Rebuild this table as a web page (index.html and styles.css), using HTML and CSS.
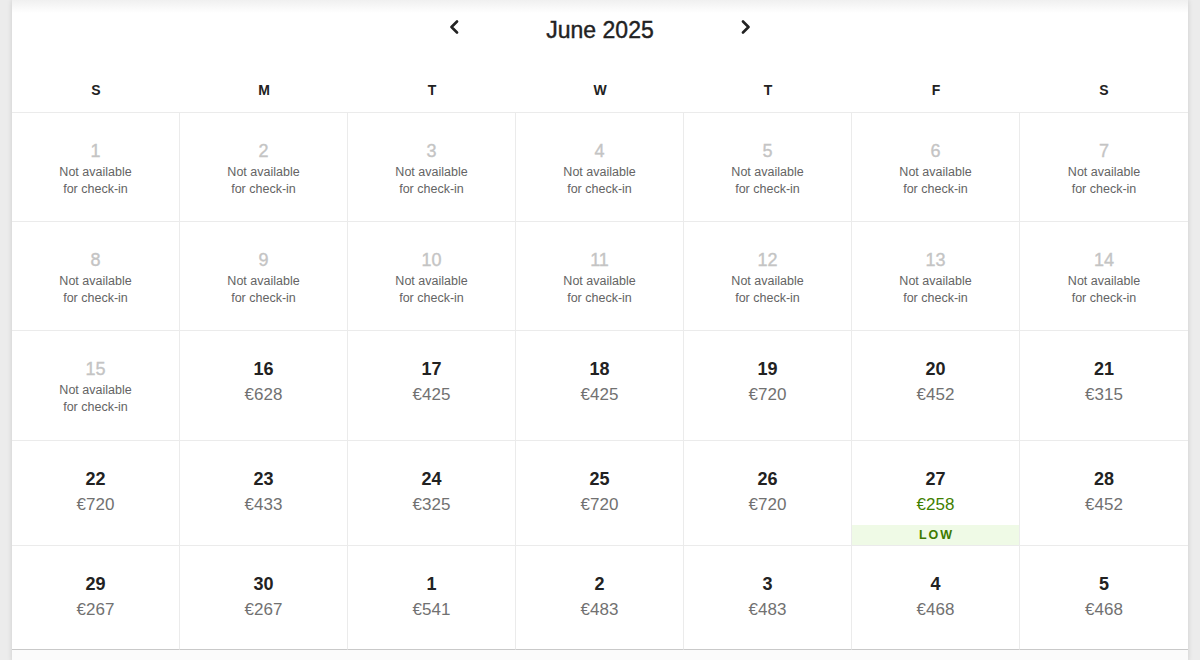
FILE: index.html
```html
<!DOCTYPE html>
<html lang="en">
<head>
<meta charset="utf-8">
<title>June 2025</title>
<link rel="stylesheet" href="styles.css">
</head>
<body>
<div class="panel">
  <div class="head">
    <button class="nav" aria-label="Previous month"><svg width="10" height="14" viewBox="0 0 10 14"><path d="M8 1.5 L2.5 7 L8 12.5" fill="none" stroke="#222" stroke-width="2.6" stroke-linecap="round" stroke-linejoin="round"/></svg></button>
    <div class="title">June 2025</div>
    <button class="nav" aria-label="Next month"><svg width="10" height="14" viewBox="0 0 10 14"><path d="M2 1.5 L7.5 7 L2 12.5" fill="none" stroke="#222" stroke-width="2.6" stroke-linecap="round" stroke-linejoin="round"/></svg></button>
  </div>
  <div class="weekdays">
    <div>S</div><div>M</div><div>T</div><div>W</div><div>T</div><div>F</div><div>S</div>
  </div>
  <div class="grid">
    <div class="cell na"><div class="d">1</div><div class="t">Not available<br>for check-in</div></div>
    <div class="cell na"><div class="d">2</div><div class="t">Not available<br>for check-in</div></div>
    <div class="cell na"><div class="d">3</div><div class="t">Not available<br>for check-in</div></div>
    <div class="cell na"><div class="d">4</div><div class="t">Not available<br>for check-in</div></div>
    <div class="cell na"><div class="d">5</div><div class="t">Not available<br>for check-in</div></div>
    <div class="cell na"><div class="d">6</div><div class="t">Not available<br>for check-in</div></div>
    <div class="cell na"><div class="d">7</div><div class="t">Not available<br>for check-in</div></div>

    <div class="cell na"><div class="d">8</div><div class="t">Not available<br>for check-in</div></div>
    <div class="cell na"><div class="d">9</div><div class="t">Not available<br>for check-in</div></div>
    <div class="cell na"><div class="d">10</div><div class="t">Not available<br>for check-in</div></div>
    <div class="cell na"><div class="d">11</div><div class="t">Not available<br>for check-in</div></div>
    <div class="cell na"><div class="d">12</div><div class="t">Not available<br>for check-in</div></div>
    <div class="cell na"><div class="d">13</div><div class="t">Not available<br>for check-in</div></div>
    <div class="cell na"><div class="d">14</div><div class="t">Not available<br>for check-in</div></div>

    <div class="cell na tall"><div class="d">15</div><div class="t">Not available<br>for check-in</div></div>
    <div class="cell"><div class="d">16</div><div class="p">€628</div></div>
    <div class="cell"><div class="d">17</div><div class="p">€425</div></div>
    <div class="cell"><div class="d">18</div><div class="p">€425</div></div>
    <div class="cell"><div class="d">19</div><div class="p">€720</div></div>
    <div class="cell"><div class="d">20</div><div class="p">€452</div></div>
    <div class="cell"><div class="d">21</div><div class="p">€315</div></div>

    <div class="cell"><div class="d">22</div><div class="p">€720</div></div>
    <div class="cell"><div class="d">23</div><div class="p">€433</div></div>
    <div class="cell"><div class="d">24</div><div class="p">€325</div></div>
    <div class="cell"><div class="d">25</div><div class="p">€720</div></div>
    <div class="cell"><div class="d">26</div><div class="p">€720</div></div>
    <div class="cell low"><div class="d">27</div><div class="p">€258</div><div class="band">LOW</div></div>
    <div class="cell"><div class="d">28</div><div class="p">€452</div></div>

    <div class="cell last"><div class="d">29</div><div class="p">€267</div></div>
    <div class="cell last"><div class="d">30</div><div class="p">€267</div></div>
    <div class="cell last"><div class="d">1</div><div class="p">€541</div></div>
    <div class="cell last"><div class="d">2</div><div class="p">€483</div></div>
    <div class="cell last"><div class="d">3</div><div class="p">€483</div></div>
    <div class="cell last"><div class="d">4</div><div class="p">€468</div></div>
    <div class="cell last"><div class="d">5</div><div class="p">€468</div></div>
  </div>
  <div class="foot"></div>
</div>
</body>
</html>
```
FILE: styles.css
```css
html, body {
  margin: 0;
  padding: 0;
}
body {
  background: #ececec;
  font-family: "Liberation Sans", Arial, sans-serif;
  color: #222;
  height: 660px;
  overflow: hidden;
}
.panel {
  margin: 0 12px;
  width: 1176px;
  background: #fff;
  box-shadow: 0 0 5px rgba(0, 0, 0, 0.14);
}
.head {
  height: 60px;
  display: flex;
  align-items: flex-start;
  justify-content: center;
  background: linear-gradient(#f0f0f0 0px, #fff 13px);
}
.nav {
  border: 0;
  background: none;
  padding: 0;
  margin-top: 20px;
  width: 10px;
  height: 14px;
  display: flex;
}
.title {
  width: 282px;
  text-align: center;
  font-size: 23px;
  line-height: 28px;
  margin-top: 16px;
  color: #222;
  -webkit-text-stroke: 0.4px #222;
}
.weekdays {
  display: grid;
  grid-template-columns: repeat(7, 168px);
  border-bottom: 1px solid #ebebeb;
  box-sizing: border-box;
  height: 53px;
}
.weekdays div {
  text-align: center;
  font-size: 14px;
  font-weight: bold;
  line-height: 18px;
  padding-top: 21px;
  color: #222;
}
.grid {
  display: grid;
  grid-template-columns: repeat(7, 168px);
}
.cell {
  display: flex;
  flex-direction: column;
  align-items: stretch;
  text-align: center;
  padding-top: 28px;
  min-height: 105px;
  box-sizing: border-box;
  border-right: 1px solid #ebebeb;
  border-bottom: 1px solid #ebebeb;
}
.cell:nth-child(7n) {
  border-right: 0;
}
.cell.na {
  min-height: 109px;
}
.cell.na.tall {
  min-height: 110px;
}
.cell.last {
  border-bottom: 1px solid #c9c9c9;
  min-height: 104px;
}
.d {
  font-size: 18px;
  font-weight: bold;
  line-height: 20px;
  color: #222;
}
.na .d {
  color: #c4c4c4;
  font-weight: normal;
  -webkit-text-stroke: 0.35px #c4c4c4;
}
.t {
  margin-top: 3px;
  font-size: 12.5px;
  line-height: 17px;
  color: #646464;
}
.p {
  margin-top: 5px;
  font-size: 17px;
  line-height: 22px;
  color: #717171;
}
.low .p {
  color: #3f8000;
}
.band {
  margin-top: auto;
  height: 20px;
  line-height: 20px;
  background: #effae6;
  color: #3d7a00;
  font-size: 12.5px;
  font-weight: bold;
  letter-spacing: 2px;
  padding-left: 2px;
}
.foot {
  height: 12px;
  background: #fbfbfb;
}
```
